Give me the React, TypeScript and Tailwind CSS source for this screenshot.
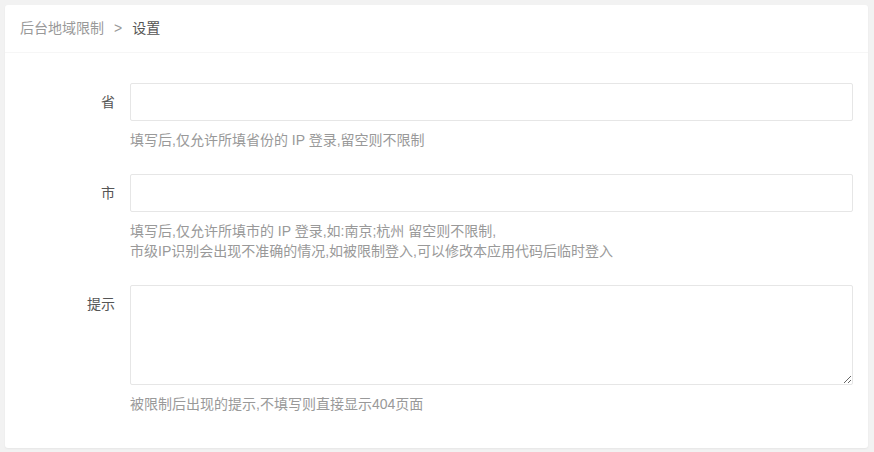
export default function App() {
  const font = { fontFamily: '"Liberation Sans", "Noto Sans CJK SC", sans-serif' };
  return (
    <div className="min-h-[452px] bg-[#f2f2f2] pt-[5px] pl-[5px] pr-[6px] pb-[5px]" style={font}>
      <div className="bg-white rounded-[3px] shadow-[0_1px_2px_0_rgba(0,0,0,0.05)]">
        {/* Header / breadcrumb */}
        <div className="h-[48px] border-b border-[#f6f6f6] px-[15px] flex items-center text-[14px]">
          <span className="text-[#999]">后台地域限制</span>
          <span className="text-[#999] mx-[10px]">&gt;</span>
          <span className="text-[#555]">设置</span>
        </div>

        {/* Body */}
        <div className="px-[15px] pt-[30px] pb-[10px] text-[14px]">
          {/* 省 */}
          <div className="flex mb-[15px]">
            <label className="w-[110px] shrink-0 text-right pr-[15px] py-[9px] leading-[20px] text-[#555]">省</label>
            <div className="flex-1">
              <input className="block w-full h-[38px] border border-[#e6e6e6] rounded-[2px] px-[10px] outline-none" />
              <div className="py-[9px] leading-[20px] text-[#999]">填写后,仅允许所填省份的 IP 登录,留空则不限制</div>
            </div>
          </div>

          {/* 市 */}
          <div className="flex mb-[15px]">
            <label className="w-[110px] shrink-0 text-right pr-[15px] py-[9px] leading-[20px] text-[#555]">市</label>
            <div className="flex-1">
              <input className="block w-full h-[38px] border border-[#e6e6e6] rounded-[2px] px-[10px] outline-none" />
              <div className="py-[9px] leading-[20px] text-[#999]">
                填写后,仅允许所填市的 IP 登录,如:南京;杭州 留空则不限制,
                <br />
                市级IP识别会出现不准确的情况,如被限制登入,可以修改本应用代码后临时登入
              </div>
            </div>
          </div>

          {/* 提示 */}
          <div className="flex mb-[15px]">
            <label className="w-[110px] shrink-0 text-right pr-[15px] py-[9px] leading-[20px] text-[#555]">提示</label>
            <div className="flex-1">
              <textarea className="block w-full h-[100px] border border-[#e6e6e6] rounded-[2px] px-[10px] py-[6px] outline-none" />
              <div className="py-[9px] leading-[20px] text-[#999]">被限制后出现的提示,不填写则直接显示404页面</div>
            </div>
          </div>
        </div>
      </div>
    </div>
  );
}
